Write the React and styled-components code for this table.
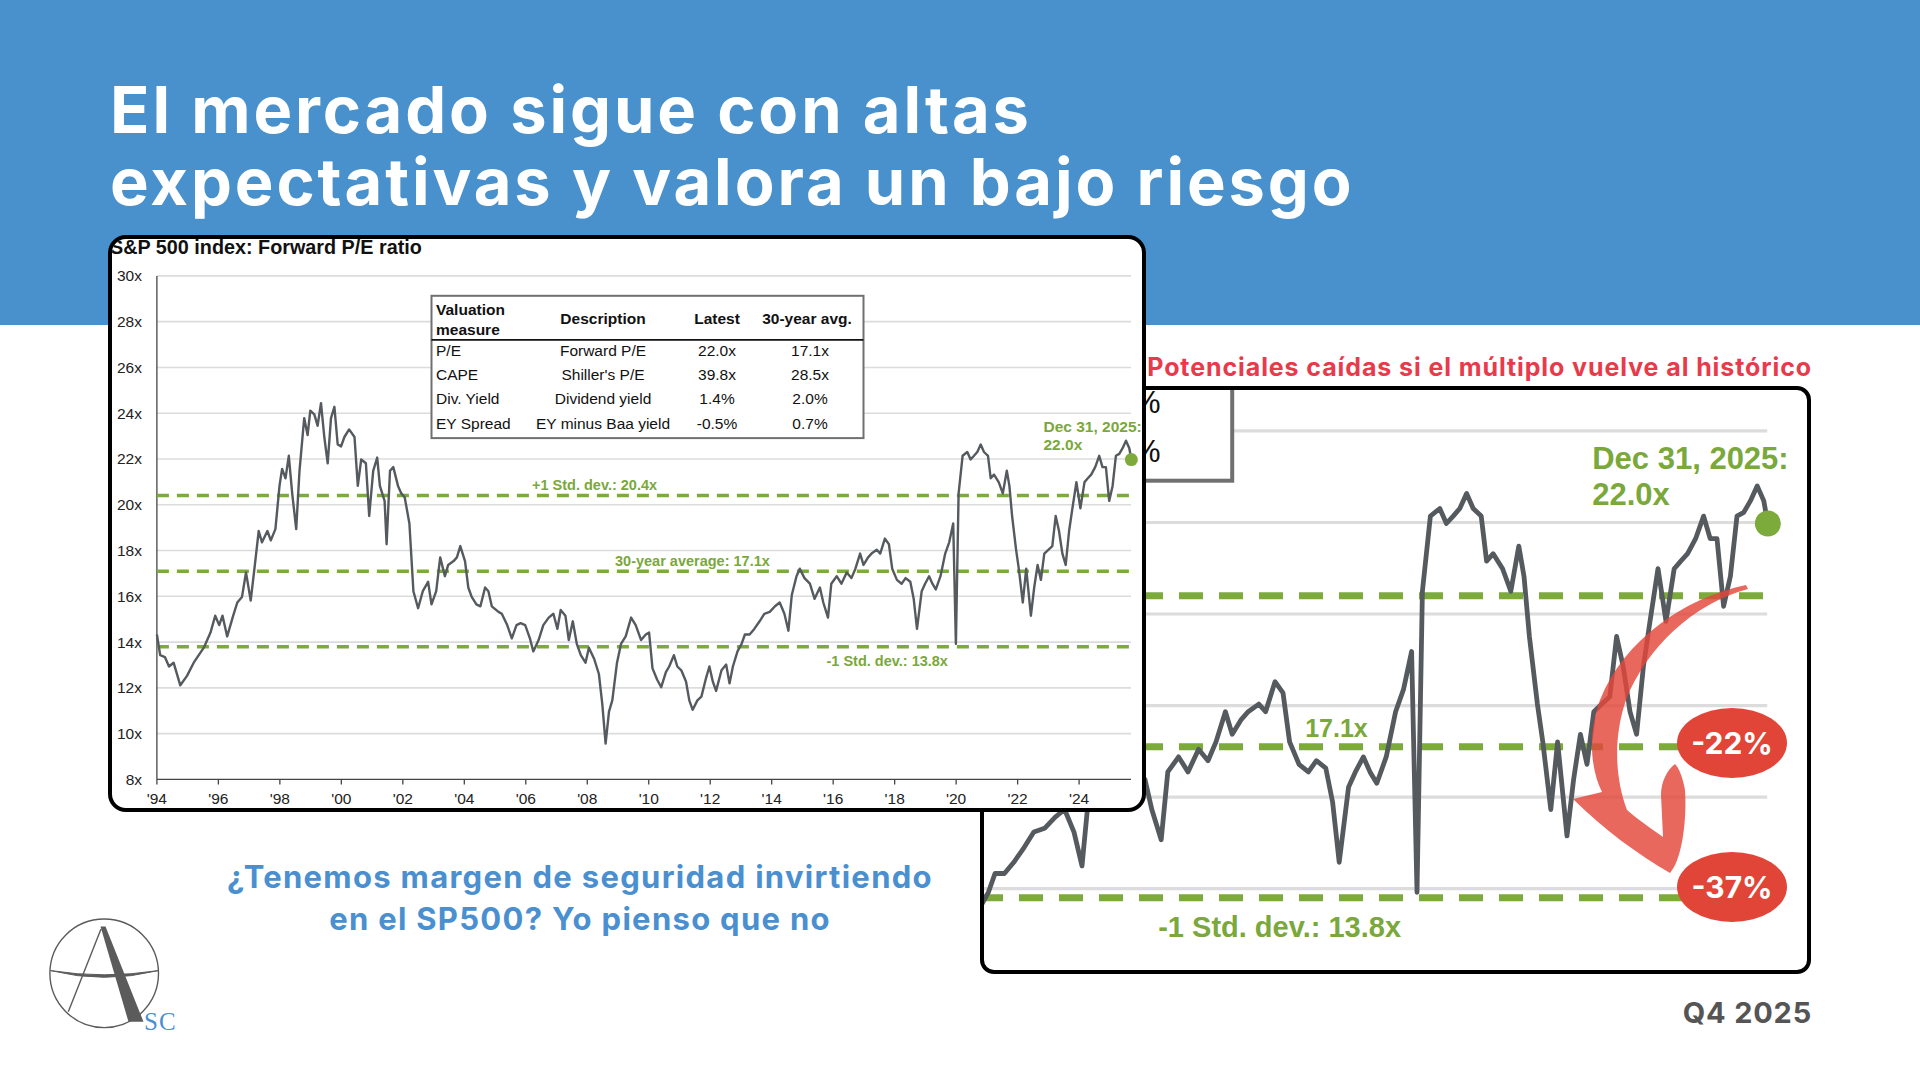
import React from "react";
import styled, {createGlobalStyle} from "styled-components";

const GlobalStyle = createGlobalStyle`
  html, body {
    margin: 0;
    padding: 0;
    background: #ffffff;
  }
  body {
    font-family: "Inter", "Liberation Sans", sans-serif;
  }
`;

// forward P/E line, digitised from the J.P. Morgan chart (raw trace units)
const TRACE = [
  [85,1075],[90,1130],[97,1135],[103,1160],[110,1150],[120,1210],[130,1185],[140,1150],[155,1110],[165,1070],
  [172,1025],[178,1050],[183,1025],[190,1080],[198,1030],[205,990],[212,975],[218,910],[225,985],[232,880],
  [237,800],[242,830],[250,800],[255,825],[262,795],[268,680],[272,635],[277,660],[282,600],[287,700],
  [293,795],[298,640],[305,500],[310,545],[314,480],[320,490],[325,520],[330,460],[335,550],[340,620],
  [345,500],[350,470],[355,570],[360,575],[365,550],[372,530],[380,550],[385,680],[390,610],[397,620],
  [402,760],[408,640],[414,605],[418,680],[425,720],[428,835],[433,640],[438,630],[445,680],[450,700],
  [455,710],[462,780],[468,960],[475,1005],[482,960],[490,935],[495,995],[502,960],[508,870],[515,920],
  [520,890],[528,880],[533,870],[538,840],[545,880],[550,950],[555,975],[562,995],[568,1000],[575,950],
  [580,960],[585,1000],[595,1015],[600,1020],[608,1050],[615,1085],[622,1050],[628,1045],[635,1050],[642,1085],
  [647,1120],[655,1090],[662,1050],[670,1030],[677,1020],[683,1060],[688,1010],[695,1025],[700,1090],[706,1040],
  [712,1100],[718,1130],[725,1150],[730,1110],[738,1140],[745,1180],[750,1260],[755,1365],[760,1280],[765,1250],
  [772,1150],[778,1100],[785,1080],[793,1030],[800,1050],[808,1090],[815,1075],[820,1070],[825,1165],[832,1195],
  [838,1215],[845,1175],[850,1160],[857,1130],[862,1160],[868,1170],[875,1200],[880,1250],[885,1275],[892,1250],
  [898,1240],[905,1190],[910,1160],[915,1200],[920,1225],[928,1170],[935,1155],[940,1205],[945,1160],[952,1120],
  [958,1100],[963,1075],[970,1075],[977,1060],[985,1040],[992,1020],[1000,1015],[1008,1000],[1015,990],[1022,1020],
  [1028,1065],[1033,970],[1040,920],[1045,900],[1052,925],[1060,940],[1067,980],[1075,950],[1080,990],[1087,1030],
  [1092,940],[1100,920],[1107,940],[1115,910],[1122,925],[1128,900],[1135,860],[1140,890],[1147,870],[1152,860],
  [1160,850],[1165,860],[1172,820],[1178,835],[1183,900],[1190,930],[1197,940],[1203,925],[1210,935],[1215,980],
  [1220,1060],[1227,960],[1232,940],[1238,920],[1243,940],[1248,955],[1255,920],[1262,860],[1268,830],[1274,780],
  [1278,1100],[1282,700],[1288,600],[1295,590],[1300,610],[1305,600],[1310,590],[1315,570],[1320,590],[1326,600],
  [1330,660],[1335,650],[1342,670],[1348,700],[1354,640],[1358,680],[1362,760],[1368,850],[1372,900],[1378,990],
  [1383,900],[1390,1025],[1395,950],[1400,890],[1405,930],[1410,860],[1416,850],[1422,840],[1427,760],[1432,800],
  [1437,860],[1442,890],[1447,800],[1452,740],[1458,670],[1464,740],[1470,670],[1475,660],[1480,650],[1486,630],
  [1492,600],[1497,630],[1502,630],[1507,720],[1512,680],[1517,600],[1522,595],[1527,580],[1532,560],[1537,580],
  [1540,610]
];

const series = TRACE.map(([px, py]) => [1994 + (px - 85) / 45.9, 30 - (py - 122) / 60.82]);

const X = year => 44.9 + (year - 1994) * 30.74;
const Y = value => 36.9 + (30 - value) * 22.886;
const PLOT_LEFT = X(1994);
const PLOT_RIGHT = 1019;

const linePoints = series.map(([t, v]) => `${X(t).toFixed(1)},${Y(v).toFixed(1)}`).join(" ");
const lastPoint = series[series.length - 1];

const gridValues = [10, 12, 14, 16, 18, 20, 22, 24, 26, 28, 30];
const axisValues = [8, ...gridValues];
const years = Array.from({length: 16}, (_, i) => 1994 + i * 2);

const tableRows = [
  ["P/E", "Forward P/E", "22.0x", "17.1x"],
  ["CAPE", "Shiller's P/E", "39.8x", "28.5x"],
  ["Div. Yield", "Dividend yield", "1.4%", "2.0%"],
  ["EY Spread", "EY minus Baa yield", "-0.5%", "0.7%"]
];

const ChartArt = ({zoomed}) => (
  <g>
    <ChartTitle x={-2} y={15}>S&amp;P 500 index: Forward P/E ratio</ChartTitle>

    {gridValues.map(v => (
      <GridLine key={v} x1={PLOT_LEFT} x2={PLOT_RIGHT} y1={Y(v)} y2={Y(v)} />
    ))}
    {axisValues.map(v => (
      <AxisText key={v} x={30} y={Y(v) + 5.5} $anchor="end">{v}x</AxisText>
    ))}

    <AxisLine x1={PLOT_LEFT} x2={PLOT_LEFT} y1={Y(30)} y2={Y(8)} />
    <AxisLine x1={PLOT_LEFT} x2={PLOT_RIGHT} y1={Y(8)} y2={Y(8)} />
    {years.map(yr => (
      <g key={yr}>
        <AxisLine x1={X(yr)} x2={X(yr)} y1={Y(8)} y2={Y(8) + 5} />
        <AxisText x={X(yr)} y={565} $anchor="middle">'{String(yr).slice(2)}</AxisText>
      </g>
    ))}

    {[20.4, 17.1, 13.8].map(v => (
      <DashLine key={v} x1={PLOT_LEFT} x2={PLOT_RIGHT} y1={Y(v)} y2={Y(v)} />
    ))}

    <TableBox x={319.5} y={56.8} width={432} height={142.3} />
    <TableText x={324} y={76} $bold>Valuation</TableText>
    <TableText x={324} y={96} $bold>measure</TableText>
    <TableText x={491} y={85} $bold $anchor="middle">Description</TableText>
    <TableText x={605} y={85} $bold $anchor="middle">Latest</TableText>
    <TableText x={695} y={85} $bold $anchor="middle">30-year avg.</TableText>
    <TableRule x1={319.5} x2={751.4} y1={100.9} y2={100.9} />
    {tableRows.map((row, i) => (
      <g key={row[0]}>
        <TableText x={324} y={117 + i * 24.2}>{row[0]}</TableText>
        <TableText x={491} y={117 + i * 24.2} $anchor="middle">{row[1]}</TableText>
        <TableText x={605} y={117 + i * 24.2} $anchor="middle">{row[2]}</TableText>
        <TableText x={698} y={117 + i * 24.2} $anchor="middle">{row[3]}</TableText>
      </g>
    ))}

    <SeriesLine points={linePoints} />
    <circle cx={X(lastPoint[0])} cy={Y(lastPoint[1])} r={6.5} fill="#7cab3c" />

    <GreenText x={420} y={251}>+1 Std. dev.: 20.4x</GreenText>
    {zoomed
      ? <GreenText x={788} y={327} $size={12.5}>17.1x</GreenText>
      : <GreenText x={503} y={327}>30-year average: 17.1x</GreenText>}
    <GreenText x={714.5} y={427}>-1 Std. dev.: 13.8x</GreenText>
    <GreenText x={931.5} y={193} $size={15.5}>Dec 31, 2025:</GreenText>
    <GreenText x={931.5} y={211} $size={15.5}>22.0x</GreenText>
  </g>
);

const Logo = () => (
  <LogoSvg width="140" height="123" viewBox="0 0 140 123">
    <circle cx="59.2" cy="61.3" r="54.3" fill="none" stroke="#5b5b5b" strokeWidth="1.4" />
    <path d="M5.6 58.6 Q59 72 113.4 58.6 Q59 67 5.6 58.6 Z" fill="#5b5b5b" stroke="#5b5b5b" strokeWidth="1" />
    <line x1="56" y1="17" x2="23.3" y2="99.7" stroke="#5b5b5b" strokeWidth="1.4" />
    <polygon points="55.5,14.5 60.5,14.5 98.5,109.8 83.5,109.8" fill="#5b5b5b" />
    <LogoText x="99" y="117.5">SC</LogoText>
  </LogoSvg>
);

const App = () => (
  <>
    <GlobalStyle />
    <Slide>
      <Title>
        El mercado sigue con altas<br />
        expectativas y valora un bajo riesgo
      </Title>

      <SourceCard>
        <svg width="1030" height="569" viewBox="0 0 1030 569">
          <ChartArt />
        </svg>
      </SourceCard>

      <Caption>Potenciales caídas si el múltiplo vuelve al histórico</Caption>

      <ZoomCard>
        <svg width="824" height="580" viewBox="0 0 824 580">
          <g transform="translate(-1254.8 -307.5) scale(2)">
            <ChartArt zoomed />
          </g>
        </svg>
        <ArrowSvg viewBox="0 0 824 580">
          <path
            d="M762 195 C700 208 640 250 616 310 C604 342 606 378 618 402 L589 409
               C620 440 655 465 686 483 C698 470 703 430 701 400 C699 388 695 378 691 374
               C683 380 677 392 677 405 L679 447 C665 437 652 428 643 420
               C630 385 630 345 642 310 C662 258 710 213 764 199 Z"
            fill="#e4473b"
            opacity="0.82"
          />
        </ArrowSvg>
        <DropBadge $top={318}>-22%</DropBadge>
        <DropBadge $top={462}>-37%</DropBadge>
      </ZoomCard>

      <Question>
        ¿Tenemos margen de seguridad invirtiendo<br />
        en el SP500? Yo pienso que no
      </Question>

      <Logo />

      <Quarter>Q4 2025</Quarter>
    </Slide>
  </>
);

const Slide = styled.div`
  width: 1920px;
  height: 1080px;
  overflow: hidden;
  display: grid;
  grid-template-columns: 108px 872px 166px 666px 108px;
  grid-template-rows: 235px 117px 34px 426px 162px 106px;
  background: linear-gradient(to bottom, #4891cc 0, #4891cc 325px, #ffffff 325px);
`;

const Title = styled.h1`
  grid-row: 1;
  grid-column: 2 / 6;
  align-self: start;
  margin: 74px 0 0 2px;
  font-family: "Inter", "Liberation Sans", sans-serif;
  font-weight: 700;
  font-size: 65px;
  line-height: 72px;
  letter-spacing: 2.9px;
  color: #ffffff;
`;

const Card = styled.div`
  background: #ffffff;
  border: 4px solid #000000;
  overflow: hidden;

  svg {
    display: block;
  }
`;

const SourceCard = styled(Card)`
  grid-row: 2 / 5;
  grid-column: 2 / 4;
  border-radius: 18px;
  z-index: 2;
`;

const ZoomCard = styled(Card)`
  grid-row: 4 / 6;
  grid-column: 3 / 5;
  width: 823px;
  border-radius: 14px;
  position: relative;
  z-index: 1;
`;

const Caption = styled.div`
  grid-row: 3;
  grid-column: 3 / 5;
  justify-self: end;
  margin-top: -2px;
  font-family: "Inter", "Liberation Sans", sans-serif;
  font-weight: 700;
  font-size: 25px;
  line-height: 34px;
  letter-spacing: 0.9px;
  color: #e83a4b;
  white-space: nowrap;
`;

const ArrowSvg = styled.svg`
  position: absolute;
  left: 0;
  top: 0;
  width: 824px;
  height: 580px;
`;

const DropBadge = styled.div`
  position: absolute;
  left: 693px;
  top: ${p => p.$top}px;
  width: 110px;
  height: 70px;
  border-radius: 50%;
  background: #e04537;
  display: flex;
  align-items: center;
  justify-content: center;
  font-family: "Inter", "Liberation Sans", sans-serif;
  font-weight: 700;
  font-size: 30px;
  color: #ffffff;
`;

const Question = styled.p`
  grid-row: 5;
  grid-column: 2 / 4;
  align-self: start;
  margin: 44px 0 0;
  padding-right: 94px;
  text-align: center;
  font-family: "Inter", "Liberation Sans", sans-serif;
  font-weight: 700;
  font-size: 31px;
  line-height: 42px;
  letter-spacing: 1.3px;
  color: #4a90d0;
`;

const LogoSvg = styled.svg`
  grid-row: 5 / 7;
  grid-column: 1 / 3;
  align-self: start;
  justify-self: start;
  margin: 100px 0 0 45px;
`;

const LogoText = styled.text`
  font-family: "Liberation Serif", serif;
  font-size: 25px;
  letter-spacing: 1px;
  fill: #4a90d0;
`;

const Quarter = styled.div`
  grid-row: 6;
  grid-column: 4;
  justify-self: end;
  align-self: start;
  margin-top: 24px;
  font-family: "Inter", "Liberation Sans", sans-serif;
  font-weight: 700;
  font-size: 29px;
  line-height: 30px;
  letter-spacing: 0.8px;
  color: #555555;
`;

const ChartTitle = styled.text`
  font-family: "Liberation Sans", Arial, sans-serif;
  font-weight: 700;
  font-size: 19.8px;
  fill: #111111;
`;

const AxisText = styled.text`
  font-family: "Liberation Sans", Arial, sans-serif;
  font-size: 15.5px;
  fill: #222222;
  text-anchor: ${p => p.$anchor || "start"};
`;

const GridLine = styled.line`
  stroke: #dcdcdc;
  stroke-width: 1.6;
`;

const AxisLine = styled.line`
  stroke: #444444;
  stroke-width: 1.3;
`;

const DashLine = styled.line`
  stroke: #7cab3c;
  stroke-width: 3.5;
  stroke-dasharray: 12 8;
`;

const TableBox = styled.rect`
  fill: #ffffff;
  stroke: #707070;
  stroke-width: 2;
`;

const TableRule = styled.line`
  stroke: #111111;
  stroke-width: 1.6;
`;

const TableText = styled.text`
  font-family: "Liberation Sans", Arial, sans-serif;
  font-size: 15.5px;
  font-weight: ${p => (p.$bold ? 700 : 400)};
  fill: #111111;
  text-anchor: ${p => p.$anchor || "start"};
`;

const SeriesLine = styled.polyline`
  fill: none;
  stroke: #555a5f;
  stroke-width: 2.4;
  stroke-linejoin: round;
`;

const GreenText = styled.text`
  font-family: "Liberation Sans", Arial, sans-serif;
  font-size: ${p => p.$size || 14.5}px;
  font-weight: 700;
  fill: #7aa83a;
`;

export default App;
